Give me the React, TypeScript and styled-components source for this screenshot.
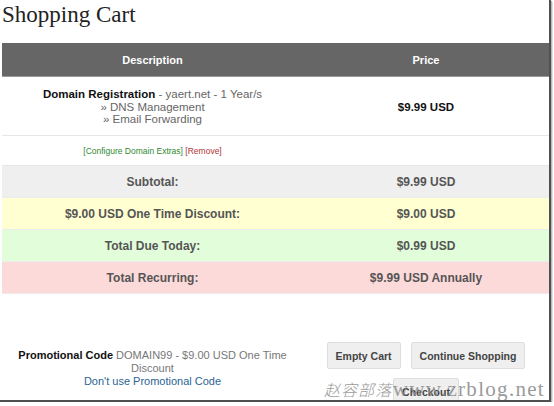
import React from "react";
import styled, { createGlobalStyle } from "styled-components";

const GlobalStyle = createGlobalStyle`
  html, body {
    margin: 0;
    padding: 0;
    background: #ffffff;
  }
  body {
    font-family: "Liberation Sans", Arial, sans-serif;
  }
`;

const Frame = styled.div`
  position: relative;
  width: 549px;
  height: 400px;
  overflow: hidden;
  background: #fff;
  border-right: 2px solid #505050;
  border-bottom: 2px solid #505050;
  box-shadow: 1px 1px 0 #b8b8b8, 2px 2px 0 #e0e0e0;
`;

const Title = styled.h1`
  margin: 0;
  padding: 1px 0 0 2px;
  height: 42px;
  font-family: "Liberation Serif", "Times New Roman", serif;
  font-weight: normal;
  font-size: 23px;
  line-height: 27px;
  color: #222;
`;

const CartTable = styled.table`
  margin-left: 2px;
  width: 547px;
  border-collapse: collapse;
  table-layout: fixed;
  text-align: center;
`;

const HeadCell = styled.th`
  height: 33px;
  padding: 0;
  background: #666666;
  color: #fff;
  font-size: 11px;
  font-weight: bold;
  border-bottom: 1px solid #9a9a9a;
`;

const ItemCell = styled.td`
  height: 56px;
  padding: 2px 0 0;
  vertical-align: middle;
  border-bottom: 1px solid #e6e6e6;
  font-size: 11.5px;
  line-height: 12.5px;
  color: #666;
`;

const ItemName = styled.strong`
  color: #111;
`;

const Price = styled.strong`
  color: #111;
`;

const ConfigCell = styled.td`
  height: 29px;
  padding: 0;
  font-size: 8.5px;
  border-bottom: 1px solid #e6e6e6;
`;

const ConfigLink = styled.span<{ $tone: "green" | "red" }>`
  color: ${(p) => (p.$tone === "green" ? "#2f8a2f" : "#b03434")};
`;

const TotalRow = styled.tr<{ $bg: string }>`
  background: ${(p) => p.$bg};
`;

const TotalCell = styled.td`
  height: 31px;
  padding: 0;
  font-size: 12px;
  font-weight: bold;
  color: #555;
  border-bottom: 1px solid #ececec;
`;

const Footer = styled.div`
  display: flex;
  margin: 48px 0 0 2px;
`;

const PromoBox = styled.div`
  width: 301px;
  padding-top: 7px;
  text-align: center;
  font-size: 11px;
  line-height: 13px;
  color: #777;
`;

const PromoLabel = styled.strong`
  color: #111;
`;

const PromoLink = styled.div`
  color: #2a6494;
`;

const Actions = styled.div`
  flex: 1;
  display: flex;
  flex-direction: column;
  align-items: center;
  gap: 9px;
`;

const ButtonRow = styled.div`
  display: flex;
  gap: 10px;
`;

const Button = styled.button`
  height: 27px;
  padding: 0 8px;
  background: #efefef;
  border: 1px solid #dedede;
  border-radius: 2px;
  font-family: "Liberation Sans", Arial, sans-serif;
  font-size: 10.5px;
  font-weight: bold;
  color: #444;
`;

const Watermark = styled.div`
  position: absolute;
  left: 324px;
  right: 4px;
  top: 377px;
  display: flex;
  align-items: baseline;
  justify-content: space-between;
  color: #8a8a8a;
  opacity: 0.85;
  pointer-events: none;
`;

const WatermarkCn = styled.span`
  font-family: "Noto Sans CJK SC", sans-serif;
  font-size: 16px;
  font-style: italic;
  font-weight: 300;
  letter-spacing: 1px;
`;

const WatermarkUrl = styled.span`
  font-family: "Liberation Serif", "Times New Roman", serif;
  font-size: 21px;
  letter-spacing: 1.3px;
`;

const totals = [
  { label: "Subtotal:", value: "$9.99 USD", bg: "#efefef" },
  { label: "$9.00 USD One Time Discount:", value: "$9.00 USD", bg: "#ffffd2" },
  { label: "Total Due Today:", value: "$0.99 USD", bg: "#e2fdda" },
  { label: "Total Recurring:", value: "$9.99 USD Annually", bg: "#fddada" },
];

const App: React.FC = () => {
  return (
    <>
      <GlobalStyle />
      <Frame>
        <Title>Shopping Cart</Title>
        <CartTable>
          <colgroup>
            <col style={{ width: 301 }} />
            <col style={{ width: 246 }} />
          </colgroup>
          <thead>
            <tr>
              <HeadCell>Description</HeadCell>
              <HeadCell>Price</HeadCell>
            </tr>
          </thead>
          <tbody>
            <tr>
              <ItemCell>
                <ItemName>Domain Registration</ItemName> - yaert.net - 1 Year/s
                <br />» DNS Management
                <br />» Email Forwarding
              </ItemCell>
              <ItemCell>
                <Price>$9.99 USD</Price>
              </ItemCell>
            </tr>
            <tr>
              <ConfigCell>
                <ConfigLink $tone="green">[Configure Domain Extras]</ConfigLink>{" "}
                <ConfigLink $tone="red">[Remove]</ConfigLink>
              </ConfigCell>
              <ConfigCell />
            </tr>
            {totals.map((t) => (
              <TotalRow key={t.label} $bg={t.bg}>
                <TotalCell>{t.label}</TotalCell>
                <TotalCell>{t.value}</TotalCell>
              </TotalRow>
            ))}
          </tbody>
        </CartTable>
        <Footer>
          <PromoBox>
            <PromoLabel>Promotional Code</PromoLabel> DOMAIN99 - $9.00 USD One Time
            Discount
            <PromoLink>Don't use Promotional Code</PromoLink>
          </PromoBox>
          <Actions>
            <ButtonRow>
              <Button>Empty Cart</Button>
              <Button>Continue Shopping</Button>
            </ButtonRow>
            <Button>Checkout</Button>
          </Actions>
        </Footer>
        <Watermark>
          <WatermarkCn>赵容部落</WatermarkCn>
          <WatermarkUrl>www.zrblog.net</WatermarkUrl>
        </Watermark>
      </Frame>
    </>
  );
};

export default App;
